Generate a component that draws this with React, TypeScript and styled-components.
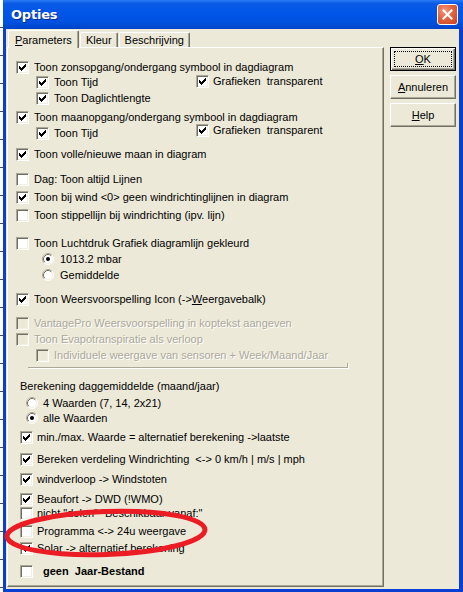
import React from "react";
import styled, { createGlobalStyle } from "styled-components";

const GlobalStyle = createGlobalStyle`
  html, body { margin: 0; padding: 0; background: #ffffff; }
  body { font-family: "Liberation Sans", Arial, sans-serif; font-size: 11px; color: #000; }
  * { box-sizing: border-box; }
`;

const Screen = styled.div`
  position: relative;
  width: 463px;
  height: 592px;
  overflow: hidden;
  display: flex;
  background: #ffffff;
`;

const Backdrop = styled.div`
  flex: none;
  width: 3px;
  background: repeating-linear-gradient(to bottom, #ffffff 0 27px, #4a4a4a 27px 28px);
`;

const Window = styled.div`
  flex: 1;
  display: flex;
  flex-direction: column;
  min-width: 0;
`;

const TitleBar = styled.div`
  flex: none;
  height: 29px;
  display: flex;
  align-items: center;
  justify-content: space-between;
  padding: 0 5px 0 8px;
  background: linear-gradient(
    to bottom,
    #2a7cf5 0%,
    #0a5ae6 12%,
    #0055e8 45%,
    #0052e0 75%,
    #0043c8 100%
  );
`;

const Title = styled.span`
  font-family: "DejaVu Sans", "Liberation Sans", sans-serif;
  font-weight: bold;
  font-size: 13px;
  color: #ffffff;
  text-shadow: 1px 1px 0 #0a2a8a;
  letter-spacing: -0.2px;
`;

const CloseButton = styled.div`
  width: 21px;
  height: 21px;
  border: 1px solid #ffffff;
  border-radius: 3px;
  background: radial-gradient(circle at 35% 30%, #f09a7e 0%, #e2643f 45%, #c8401d 100%);
  display: flex;
  align-items: center;
  justify-content: center;
`;

const Frame = styled.div`
  flex: 1;
  display: flex;
  gap: 6px;
  padding: 1px 3px 2px 1px;
  background: #ece9d8;
  border-left: 3px solid #0a3fd4;
  border-right: 4px solid #0a3fd4;
  border-bottom: 3px solid #0a3fd4;
`;

const TabArea = styled.div`
  flex: none;
  width: 377px;
  display: flex;
  flex-direction: column;
`;

const TabStrip = styled.div`
  flex: none;
  height: 17px;
  display: flex;
  align-items: flex-end;
  padding-left: 1px;
`;

const Tab = styled.div<{ $active?: boolean }>`
  position: relative;
  z-index: ${(p) => (p.$active ? 2 : 1)};
  height: ${(p) => (p.$active ? 18 : 15)}px;
  margin-bottom: ${(p) => (p.$active ? -1 : 0)}px;
  margin-left: ${(p) => (p.$active ? 0 : 1)}px;
  padding: ${(p) => (p.$active ? "1px 6px 0 6px" : "0 5px")};
  display: flex;
  align-items: center;
  background: #ece9d8;
  border-top: 1px solid #ffffff;
  border-left: 1px solid #ffffff;
  border-right: 1px solid #716f64;
  border-radius: 2px 2px 0 0;
  box-shadow: inset -1px 0 0 #aca899;
  white-space: nowrap;
`;

const TabPanel = styled.div`
  flex: 1;
  display: flex;
  flex-direction: column;
  padding-top: 12px;
  border-top: 1px solid #ffffff;
  border-left: 1px solid #ffffff;
  border-right: 1px solid #716f64;
  border-bottom: 1px solid #716f64;
  box-shadow: inset -1px -1px 0 #aca899;
`;

const Row = styled.div<{ $mt?: number; $indent?: number }>`
  flex: none;
  height: 14px;
  display: flex;
  align-items: center;
  margin-top: ${(p) => p.$mt ?? 0}px;
  padding-left: ${(p) => p.$indent ?? 8}px;
`;

const Cell = styled.div<{ $w: number }>`
  flex: none;
  width: ${(p) => p.$w}px;
  display: flex;
  align-items: center;
`;

const Item = styled.span<{ $gap: number; $raise?: number }>`
  display: inline-flex;
  align-items: center;
  gap: ${(p) => p.$gap}px;
  position: relative;
  top: ${(p) => -(p.$raise ?? 0)}px;
`;

const Box = styled.span<{ $disabled?: boolean }>`
  flex: none;
  width: 13px;
  height: 13px;
  display: flex;
  align-items: center;
  justify-content: center;
  background: ${(p) => (p.$disabled ? "#ece9d8" : "#ffffff")};
  border: 1px solid;
  border-color: #aca899 #ffffff #ffffff #aca899;
  box-shadow: inset 1px 1px 0 #716f64, inset -1px -1px 0 #f1efe2;
`;

const Label = styled.span<{ $disabled?: boolean; $bold?: boolean }>`
  white-space: pre;
  line-height: 14px;
  font-weight: ${(p) => (p.$bold ? "bold" : "normal")};
  color: ${(p) => (p.$disabled ? "#aca899" : "#000000")};
  text-shadow: ${(p) => (p.$disabled ? "1px 1px 0 #ffffff" : "none")};
`;

const Plain = styled.span`
  white-space: pre;
  line-height: 14px;
`;

const Mnemonic = styled.span`
  text-decoration: underline;
  text-underline-offset: 1px;
`;

const Groove = styled.div`
  flex: none;
  margin: 1px 0 0 20px;
  width: 320px;
  height: 5px;
  border-bottom: 1px solid #aca899;
  border-right: 1px solid #aca899;
  box-shadow: 1px 1px 0 #ffffff;
`;

const ButtonColumn = styled.div`
  flex: none;
  width: 66px;
  display: flex;
  flex-direction: column;
  gap: 4px;
  padding-top: 17px;
`;

const Button = styled.div<{ $default?: boolean }>`
  height: 24px;
  display: flex;
  padding: ${(p) => (p.$default ? "3px" : "0")};
  background: #ece9d8;
  border: 1px solid;
  border-color: ${(p) => (p.$default ? "#000 #000 #000 #000" : "#ffffff #716f64 #716f64 #ffffff")};
  box-shadow: ${(p) =>
    p.$default
      ? "inset 1px 1px 0 #ffffff, inset -1px -1px 0 #716f64, inset -2px -2px 0 #aca899"
      : "inset -1px -1px 0 #aca899"};
`;

const ButtonFace = styled.span<{ $focus?: boolean }>`
  flex: 1;
  display: flex;
  align-items: center;
  justify-content: center;
  border: 1px dotted ${(p) => (p.$focus ? "#000" : "transparent")};
  white-space: nowrap;
`;

const Annotation = styled.svg`
  position: absolute;
  left: 2px;
  top: 505px;
  pointer-events: none;
`;

const CheckMark = () => (
  <svg width="7" height="7" viewBox="0 0 7 7" shapeRendering="crispEdges">
    {[2, 3, 4, 3, 2, 1, 0].map((y, x) => (
      <rect key={x} x={x} y={y} width="1" height="3" fill="#000" />
    ))}
  </svg>
);

type CheckProps = {
  checked?: boolean;
  disabled?: boolean;
  bold?: boolean;
  gap?: number;
  raise?: number;
  children: React.ReactNode;
};

const Check = ({ checked, disabled, bold, gap = 5, raise, children }: CheckProps) => (
  <Item $gap={gap} $raise={raise}>
    <Box $disabled={disabled}>{checked && <CheckMark />}</Box>
    <Label $disabled={disabled} $bold={bold}>
      {children}
    </Label>
  </Item>
);

const RadioDot = ({ checked }: { checked?: boolean }) => (
  <svg width="12" height="12" viewBox="0 0 12 12">
    <circle cx="6" cy="6" r="5" fill="#ffffff" />
    <path d="M 2.11 9.89 A 5.5 5.5 0 0 1 9.89 2.11" stroke="#aca899" fill="none" />
    <path d="M 9.89 2.11 A 5.5 5.5 0 0 1 2.11 9.89" stroke="#ffffff" fill="none" />
    <path d="M 2.82 9.18 A 4.5 4.5 0 0 1 9.18 2.82" stroke="#716f64" fill="none" />
    <path d="M 9.18 2.82 A 4.5 4.5 0 0 1 2.82 9.18" stroke="#f1efe2" fill="none" />
    {checked && <circle cx="6" cy="6" r="2" fill="#000" />}
  </svg>
);

const Radio = ({ checked, gap = 6, children }: { checked?: boolean; gap?: number; children: React.ReactNode }) => (
  <Item $gap={gap}>
    <RadioDot checked={checked} />
    <Label>{children}</Label>
  </Item>
);

export default function App() {
  return (
    <>
      <GlobalStyle />
      <Screen>
        <Backdrop />
        <Window>
          <TitleBar>
            <Title>Opties</Title>
            <CloseButton>
              <svg width="11" height="11" viewBox="0 0 11 11">
                <path d="M1.5 1.5 L9.5 9.5 M9.5 1.5 L1.5 9.5" stroke="#ffffff" strokeWidth="2" strokeLinecap="square" />
              </svg>
            </CloseButton>
          </TitleBar>
          <Frame>
            <TabArea>
              <TabStrip>
                <Tab $active>
                  <Mnemonic>P</Mnemonic>arameters
                </Tab>
                <Tab>Kleur</Tab>
                <Tab>Beschrijving</Tab>
              </TabStrip>
              <TabPanel>
                <Row>
                  <Check checked>Toon zonsopgang/ondergang symbool in dagdiagram</Check>
                </Row>
                <Row $mt={1} $indent={28}>
                  <Cell $w={160}>
                    <Check checked>Toon Tijd</Check>
                  </Cell>
                  <Check checked gap={4} raise={1}>
                    Grafieken  transparent
                  </Check>
                </Row>
                <Row $mt={2} $indent={28}>
                  <Check checked>Toon Daglichtlengte</Check>
                </Row>
                <Row $mt={5}>
                  <Check checked>Toon maanopgang/ondergang symbool in dagdiagram</Check>
                </Row>
                <Row $mt={2} $indent={28}>
                  <Cell $w={160}>
                    <Check checked>Toon Tijd</Check>
                  </Cell>
                  <Check checked gap={4} raise={3}>
                    Grafieken  transparent
                  </Check>
                </Row>
                <Row $mt={7}>
                  <Check checked>Toon volle/nieuwe maan in diagram</Check>
                </Row>
                <Row $mt={11}>
                  <Check>Dag: Toon altijd Lijnen</Check>
                </Row>
                <Row $mt={4}>
                  <Check checked>Toon bij wind &lt;0&gt; geen windrichtinglijnen in diagram</Check>
                </Row>
                <Row $mt={4}>
                  <Check>Toon stippellijn bij windrichting (ipv. lijn)</Check>
                </Row>
                <Row $mt={14}>
                  <Check>Toon Luchtdruk Grafiek diagramlijn gekleurd</Check>
                </Row>
                <Row $mt={2} $indent={34}>
                  <Radio checked>1013.2 mbar</Radio>
                </Row>
                <Row $mt={2} $indent={34}>
                  <Radio>Gemiddelde</Radio>
                </Row>
                <Row $mt={10}>
                  <Check checked>
                    Toon Weersvoorspelling Icon (-&gt;<Mnemonic>W</Mnemonic>eergavebalk)
                  </Check>
                </Row>
                <Row $mt={10}>
                  <Check disabled>VantagePro Weersvoorspelling in koptekst aangeven</Check>
                </Row>
                <Row $mt={2}>
                  <Check disabled>Toon Evapotranspiratie als verloop</Check>
                </Row>
                <Row $mt={2} $indent={28}>
                  <Check disabled>Individuele weergave van sensoren + Week/Maand/Jaar</Check>
                </Row>
                <Groove />
                <Row $mt={11} $indent={12}>
                  <Plain>Berekening daggemiddelde (maand/jaar)</Plain>
                </Row>
                <Row $mt={3} $indent={18}>
                  <Radio gap={5}>4 Waarden (7, 14, 2x21)</Radio>
                </Row>
                <Row $mt={1} $indent={18}>
                  <Radio checked gap={5}>
                    alle Waarden
                  </Radio>
                </Row>
                <Row $mt={5} $indent={12}>
                  <Check checked gap={4}>
                    min./max. Waarde = alternatief berekening -&gt;laatste
                  </Check>
                </Row>
                <Row $mt={8} $indent={12}>
                  <Check checked gap={4}>
                    Bereken verdeling Windrichting  &lt;-&gt; 0 km/h | m/s | mph
                  </Check>
                </Row>
                <Row $mt={6} $indent={12}>
                  <Check checked gap={4}>
                    windverloop -&gt; Windstoten
                  </Check>
                </Row>
                <Row $mt={6} $indent={12}>
                  <Check checked gap={4}>
                    Beaufort -&gt; DWD (!WMO)
                  </Check>
                </Row>
                <Row $mt={0} $indent={12}>
                  <Check gap={4}>nicht "delen" "Beschikbaar vanaf:"</Check>
                </Row>
                <Row $mt={4} $indent={12}>
                  <Check gap={4}>Programma &lt;-&gt; 24u weergave</Check>
                </Row>
                <Row $mt={3} $indent={12}>
                  <Check checked gap={4}>
                    Solar -&gt; alternatief berekening
                  </Check>
                </Row>
                <Row $mt={9} $indent={12}>
                  <Check bold gap={10}>
                    geen  Jaar-Bestand
                  </Check>
                </Row>
              </TabPanel>
            </TabArea>
            <ButtonColumn>
              <Button $default>
                <ButtonFace $focus>
                  <Mnemonic>O</Mnemonic>K
                </ButtonFace>
              </Button>
              <Button>
                <ButtonFace>
                  <Mnemonic>A</Mnemonic>nnuleren
                </ButtonFace>
              </Button>
              <Button>
                <ButtonFace>
                  <Mnemonic>H</Mnemonic>elp
                </ButtonFace>
              </Button>
            </ButtonColumn>
          </Frame>
        </Window>
        <Annotation width="210" height="56" viewBox="0 0 210 56">
          <ellipse
            cx="104"
            cy="28"
            rx="99"
            ry="21.5"
            fill="none"
            stroke="#ec1c24"
            strokeWidth="5"
            transform="rotate(-2 104 28)"
          />
        </Annotation>
      </Screen>
    </>
  );
}
